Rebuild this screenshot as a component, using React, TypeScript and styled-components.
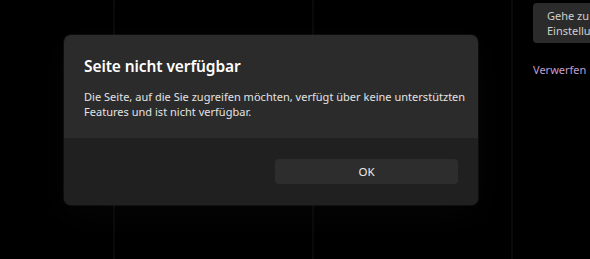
import React from 'react';
import styled, { createGlobalStyle } from 'styled-components';

const GlobalStyle = createGlobalStyle`
	html, body {
		margin: 0;
		padding: 0;
		background: #000;
	}
	body {
		font-family: 'Noto Sans', 'Open Sans', sans-serif;
		-webkit-font-smoothing: antialiased;
	}
`;

const Page = styled.div`
	position: relative;
	width: 590px;
	height: 259px;
	overflow: hidden;
	background: #000;
`;

const Underlay = styled.div`
	display: flex;
	height: 100%;
`;

const Column = styled.div<{ $width?: number }>`
	flex: ${(p) => (p.$width ? `0 0 ${p.$width}px` : '1 0 0')};
	min-width: 0;
`;

const Divider = styled.div`
	flex: 0 0 2px;
	background: #0a0a0a;
`;

const SideColumn = styled(Column)`
	display: flex;
	flex-direction: column;
	align-items: flex-start;
	padding: 3px 0 0 20px;
	gap: 19px;
	white-space: nowrap;
`;

const SettingsButton = styled.button`
	width: 110px;
	height: 40px;
	padding: 4px 14px;
	border: none;
	border-radius: 4px;
	background: #2b2b2b;
	color: #cfcfcf;
	font: 400 11px/15px 'Noto Sans', sans-serif;
	text-align: left;
	white-space: nowrap;
`;

const LinkButton = styled.span`
	color: #c49fcf;
	font: 400 11px/15px 'Noto Sans', sans-serif;
`;

const Overlay = styled.div`
	position: absolute;
	inset: 0;
	padding: 35px 0 0 64px;
`;

const Dialog = styled.div`
	width: 414px;
	border-radius: 7px;
	overflow: hidden;
	background: #2b2b2b;
	box-shadow: 0 0 0 1px rgba(255, 255, 255, 0.05), 0 10px 36px rgba(24, 24, 24, 0.25);
`;

const Content = styled.div`
	padding: 20px 4px 20px 20px;
	height: 103px;
	box-sizing: border-box;
`;

const Title = styled.h2`
	margin: 0 0 12px;
	color: #fff;
	font: 600 15.5px/22px 'Noto Sans', sans-serif;
	letter-spacing: -0.1px;
`;

const Body = styled.p`
	margin: 0;
	color: #e3e3e3;
	font: 400 11px/15px 'Noto Sans', sans-serif;
	letter-spacing: 0.02px;
`;

const Footer = styled.div`
	display: grid;
	grid-template-columns: 1fr 1fr;
	gap: 8px;
	padding: 21px 20px;
	background: #202020;
`;

const PrimaryButton = styled.button`
	grid-column: 2;
	height: 25px;
	border: none;
	border-radius: 4px;
	background: #2d2d2d;
	color: #ececec;
	font: 400 11.5px/25px 'Noto Sans', sans-serif;
	padding: 0;
`;

export default function App() {
	return (
		<Page>
			<GlobalStyle />
			<Underlay>
				<Column $width={113} />
				<Divider />
				<Column $width={197} />
				<Divider />
				<Column $width={197} />
				<Divider />
				<SideColumn>
					<SettingsButton>
						Gehe zu
						<br />
						Einstellungen
					</SettingsButton>
					<LinkButton>Verwerfen</LinkButton>
				</SideColumn>
			</Underlay>
			<Overlay>
				<Dialog role="dialog">
					<Content>
						<Title>Seite nicht verfügbar</Title>
						<Body>
							Die Seite, auf die Sie zugreifen möchten, verfügt über keine unterstützten Features und ist nicht
							verfügbar.
						</Body>
					</Content>
					<Footer>
						<PrimaryButton>OK</PrimaryButton>
					</Footer>
				</Dialog>
			</Overlay>
		</Page>
	);
}
